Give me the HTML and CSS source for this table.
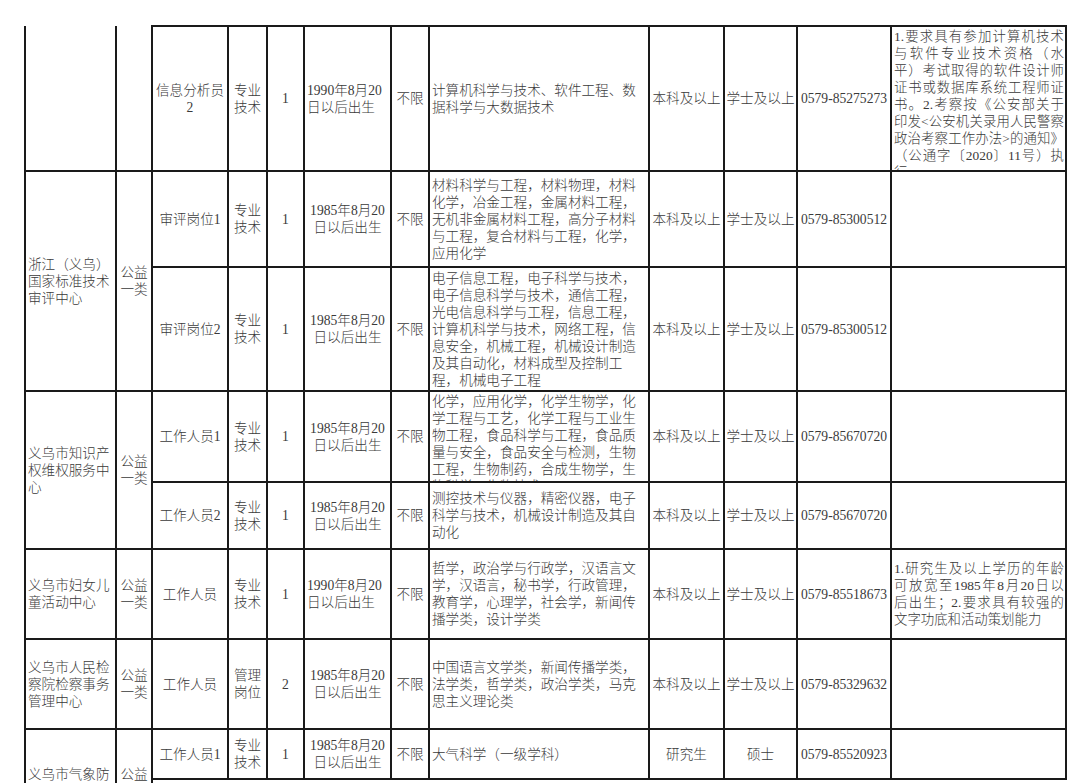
FILE: index.html
```html
<!DOCTYPE html>
<html lang="zh-CN">
<head>
<meta charset="utf-8">
<title>岗位表</title>
<link rel="stylesheet" href="styles.css">
</head>
<body>
<table class="sheet">
  <colgroup>
    <col class="w-unit"><col class="w-type"><col class="w-post"><col class="w-cat"><col class="w-num"><col class="w-age"><col class="w-sex"><col class="w-major"><col class="w-edu"><col class="w-deg"><col class="w-tel"><col class="w-note">
  </colgroup>
  <tr class="r1">
    <td class="notop"></td>
    <td class="notop"></td>
    <td>信息分析员<br>2</td>
    <td>专业<br>技术</td>
    <td>1</td>
    <td class="lft">1990年8月20<br>日以后出生</td>
    <td>不限</td>
    <td class="lft">计算机科学与技术、软件工程、数<br>据科学与大数据技术</td>
    <td>本科及以上</td>
    <td>学士及以上</td>
    <td class="tel">0579-85275273</td>
    <td class="note top">
      <div class="clip h1">
        <div class="jl">1.要求具有参加计算机技术</div>
        <div class="jl">与软件专业技术资格（水</div>
        <div class="jl">平）考试取得的软件设计师</div>
        <div class="jl">证书或数据库系统工程师证</div>
        <div class="jl">书。2.考察按《公安部关于</div>
        <div class="jl">印发&lt;公安机关录用人民警察</div>
        <div class="jl">政治考察工作办法&gt;的通知》</div>
        <div class="jl">（公通字〔2020〕11号）执</div>
        <div>行</div>
      </div>
    </td>
  </tr>
  <tr class="r2">
    <td rowspan="2" class="unit">浙江（义乌）<br>国家标准技术<br>审评中心</td>
    <td rowspan="2">公益<br>一类</td>
    <td>审评岗位1</td>
    <td>专业<br>技术</td>
    <td>1</td>
    <td>1985年8月20<br>日以后出生</td>
    <td>不限</td>
    <td class="lft">材料科学与工程，材料物理，材料<br>化学，冶金工程，金属材料工程，<br>无机非金属材料工程，高分子材料<br>与工程，复合材料与工程，化学，<br>应用化学</td>
    <td>本科及以上</td>
    <td>学士及以上</td>
    <td class="tel">0579-85300512</td>
    <td></td>
  </tr>
  <tr class="r3">
    <td>审评岗位2</td>
    <td>专业<br>技术</td>
    <td>1</td>
    <td>1985年8月20<br>日以后出生</td>
    <td>不限</td>
    <td class="lft">电子信息工程，电子科学与技术，<br>电子信息科学与技术，通信工程，<br>光电信息科学与工程，信息工程，<br>计算机科学与技术，网络工程，信<br>息安全，机械工程，机械设计制造<br>及其自动化，材料成型及控制工<br>程，机械电子工程</td>
    <td>本科及以上</td>
    <td>学士及以上</td>
    <td class="tel">0579-85300512</td>
    <td></td>
  </tr>
  <tr class="r4">
    <td rowspan="2" class="unit">义乌市知识产<br>权维权服务中<br>心</td>
    <td rowspan="2">公益<br>一类</td>
    <td>工作人员1</td>
    <td>专业<br>技术</td>
    <td>1</td>
    <td>1985年8月20<br>日以后出生</td>
    <td>不限</td>
    <td class="lft top"><div class="clip h4">化学，应用化学，化学生物学，化<br>学工程与工艺，化学工程与工业生<br>物工程，食品科学与工程，食品质<br>量与安全，食品安全与检测，生物<br>工程，生物制药，合成生物学，生<br>物科学，生物技术</div></td>
    <td>本科及以上</td>
    <td>学士及以上</td>
    <td class="tel">0579-85670720</td>
    <td></td>
  </tr>
  <tr class="r5">
    <td>工作人员2</td>
    <td>专业<br>技术</td>
    <td>1</td>
    <td>1985年8月20<br>日以后出生</td>
    <td>不限</td>
    <td class="lft">测控技术与仪器，精密仪器，电子<br>科学与技术，机械设计制造及其自<br>动化</td>
    <td>本科及以上</td>
    <td>学士及以上</td>
    <td class="tel">0579-85670720</td>
    <td></td>
  </tr>
  <tr class="r6">
    <td class="unit">义乌市妇女儿<br>童活动中心</td>
    <td>公益<br>一类</td>
    <td>工作人员</td>
    <td>专业<br>技术</td>
    <td>1</td>
    <td class="lft">1990年8月20<br>日以后出生</td>
    <td>不限</td>
    <td class="lft">哲学，政治学与行政学，汉语言文<br>学，汉语言，秘书学，行政管理，<br>教育学，心理学，社会学，新闻传<br>播学类，设计学类</td>
    <td>本科及以上</td>
    <td>学士及以上</td>
    <td class="tel">0579-85518673</td>
    <td class="note">
      <div class="jl">1.研究生及以上学历的年龄</div>
      <div class="jl">可放宽至1985年8月20日以</div>
      <div class="jl">后出生；2.要求具有较强的</div>
      <div>文字功底和活动策划能力</div>
    </td>
  </tr>
  <tr class="r7">
    <td class="unit">义乌市人民检<br>察院检察事务<br>管理中心</td>
    <td>公益<br>一类</td>
    <td>工作人员</td>
    <td>管理<br>岗位</td>
    <td>2</td>
    <td>1985年8月20<br>日以后出生</td>
    <td>不限</td>
    <td class="lft">中国语言文学类，新闻传播学类，<br>法学类，哲学类，政治学类，马克<br>思主义理论类</td>
    <td>本科及以上</td>
    <td>学士及以上</td>
    <td class="tel">0579-85329632</td>
    <td></td>
  </tr>
  <tr class="r8">
    <td rowspan="2" class="unit">义乌市气象防<br>灾减灾中心</td>
    <td rowspan="2">公益<br>一类</td>
    <td>工作人员1</td>
    <td>专业<br>技术</td>
    <td>1</td>
    <td>1985年8月20<br>日以后出生</td>
    <td>不限</td>
    <td class="lft">大气科学（一级学科）</td>
    <td>研究生</td>
    <td>硕士</td>
    <td class="tel">0579-85520923</td>
    <td></td>
  </tr>
  <tr class="r9"></tr>
</table>
</body>
</html>
```

FILE: styles.css
```css
html, body {
  margin: 0;
  height: 783px;
  overflow: hidden;
  background: #ffffff;
}

body {
  font-family: "Liberation Serif", "Noto Sans CJK SC", serif;
  font-size: 13.6px;
  line-height: 17px;
  font-weight: 300;
  color: #3a3a3a;
}

.sheet {
  border-collapse: collapse;
  table-layout: fixed;
  width: 1041px;
  margin: 25px 0 0 24px;
}

.w-unit { width: 91px; }
.w-type { width: 36px; }
.w-post { width: 76px; }
.w-cat { width: 39px; }
.w-num { width: 37px; }
.w-age { width: 87px; }
.w-sex { width: 38px; }
.w-major { width: 220px; }
.w-edu { width: 75px; }
.w-deg { width: 73px; }
.w-tel { width: 94px; }
.w-note { width: 175px; }

.sheet td {
  border: 2px solid #1a1a1a;
  padding: 0 1px;
  vertical-align: middle;
  text-align: center;
  white-space: nowrap;
  overflow: hidden;
}

.sheet td.notop {
  border-top: none;
}

.sheet td.lft {
  text-align: left;
  padding-left: 2px;
}

.sheet td.unit {
  text-align: left;
  padding-left: 2px;
}

.sheet td.tel {
  padding: 0;
}

.sheet td.top {
  vertical-align: top;
}

.sheet td.note {
  text-align: left;
  padding: 0 1px 0 2px;
  font-size: 13.4px;
}

.jl {
  text-align: justify;
  text-align-last: justify;
}

.clip {
  overflow: hidden;
}

.h1 {
  height: 143px;
  padding-top: 1px;
  box-sizing: border-box;
}

.h4 {
  height: 89px;
  padding-top: 1px;
  box-sizing: border-box;
}

.r1 { height: 145px; }
.r2 { height: 96px; }
.r3 { height: 124px; }
.r4 { height: 91px; }
.r5 { height: 67px; }
.r6 { height: 90px; }
.r7 { height: 90px; }
.r8 { height: 50px; }
.r9 { height: 57px; }
```
